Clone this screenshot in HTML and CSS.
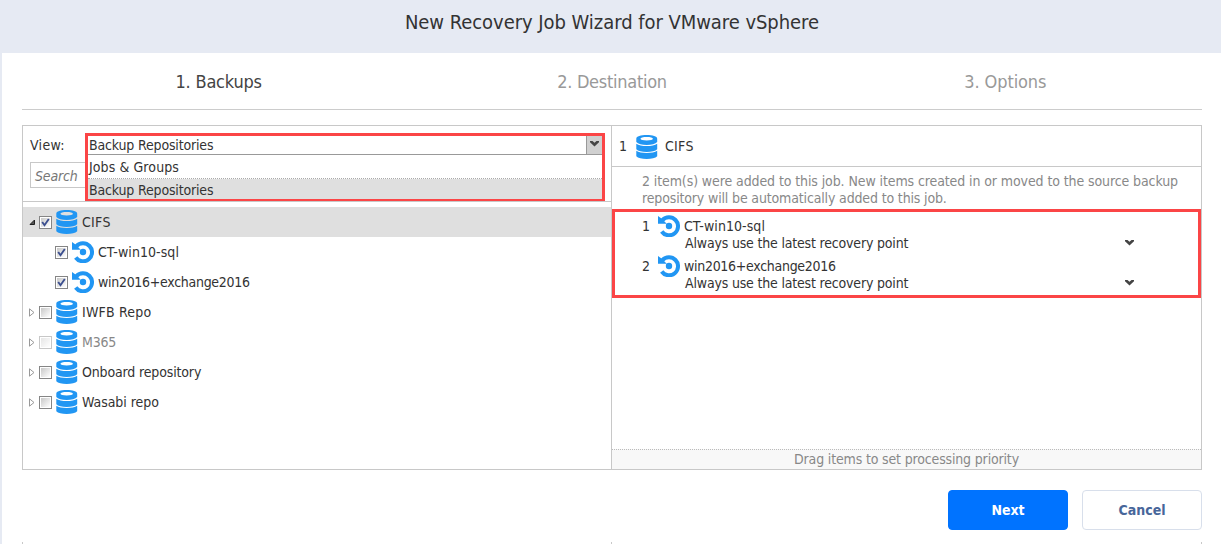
FILE: index.html
```html
<!DOCTYPE html>
<html lang="en">
<head>
<meta charset="utf-8">
<title>New Recovery Job Wizard for VMware vSphere</title>
<link rel="stylesheet" href="styles.css">
</head>
<body>
<svg class="defs" aria-hidden="true">
  <symbol id="db" viewBox="0 0 22 24">
    <path fill="#2196f3" fill-rule="evenodd" d="M0.3 3.800C0.3 1.400 4.800 0.1 10.700 0.1S21.200 1.400 21.200 3.800V7C19.500 9 15.500 9.900 10.700 9.900S2 9 0.300 7ZM10.700 2.100C7 2.100 4.500 2.700 4.500 3.700S7 5.400 10.700 5.400S16.900 4.700 16.900 3.700S14.400 2.100 10.700 2.100Z"/>
    <path fill="#2196f3" d="M0.300 8.700C2.500 10.300 6.300 11 10.700 11S19 10.300 21.200 8.700V14.200C19.500 16.100 15.500 16.900 10.700 16.900S2 16.100 0.300 14.200ZM0.300 15.800C2.500 17.400 6.300 18 10.700 18S19 17.400 21.200 15.800V21.300C19.500 23.100 15.500 23.900 10.700 23.900S2 23.100 0.300 21.300Z"/>
  </symbol>
  <symbol id="point" viewBox="0 0 22 22">
    <path fill="none" stroke="#2196f3" stroke-width="4" d="M4.300 5.300A9 9 0 1 1 3.700 16.500"/>
    <path fill="#2196f3" d="M0 1L3.500 3.500L8.800 8.800H0Z"/>
    <circle cx="11" cy="11" r="3.200" fill="#2196f3"/>
  </symbol>
  <symbol id="chev" viewBox="0 0 9 6">
    <path fill="#444" d="M0 0H2.500L4.500 1.800L6.500 0H9V1.200L4.500 5.500L0 1.200Z"/>
  </symbol>
  <symbol id="closed" viewBox="0 0 6 9">
    <path fill="#fff" stroke="#999" stroke-width="1" d="M.5 .8V8.200L5 4.500Z"/>
  </symbol>
  <symbol id="opened" viewBox="0 0 7 7">
    <path fill="#555" stroke="#222" stroke-width="1" d="M5.500 1V5.500H1Z"/>
  </symbol>
  <symbol id="tick" viewBox="0 0 9 9">
    <path fill="none" stroke="#3c4f8f" stroke-width="1.900" d="M1.200 4L3.500 7.200L7.800 1"/>
  </symbol>
</svg>
<header class="title"><span class="t-title">New Recovery Job Wizard for VMware vSphere</span></header>
<main class="wizard">
  <nav class="steps">
    <div class="step active"><span class="t-s1">1. Backups</span></div>
    <div class="step"><span class="t-s2">2. Destination</span></div>
    <div class="step"><span class="t-s3">3. Options</span></div>
  </nav>
  <div class="panels">
    <section class="source">
      <div class="filters">
        <div class="view"><span class="t-cifs">View:</span></div>
        <div class="search">Search</div>
        <div class="combo">
          <div class="value"><span class="t-repo">Backup Repositories</span><i class="arrow"><svg class="chev"><use href="#chev"/></svg></i></div>
          <div class="option"><span class="t-jobs">Jobs &amp; Groups</span></div>
          <div class="option chosen"><span class="t-repo">Backup Repositories</span></div>
        </div>
      </div>
      <div class="tree">
        <div class="node selected"><svg class="exp open"><use href="#opened"/></svg><i class="check"><svg><use href="#tick"/></svg></i><svg class="db"><use href="#db"/></svg><span class="t-cifs">CIFS</span></div>
        <div class="node child"><i class="check"><svg><use href="#tick"/></svg></i><svg class="point"><use href="#point"/></svg><span class="t-ct">CT-win10-sql</span></div>
        <div class="node child"><i class="check"><svg><use href="#tick"/></svg></i><svg class="point"><use href="#point"/></svg><span class="t-win">win2016+exchange2016</span></div>
        <div class="node"><svg class="exp"><use href="#closed"/></svg><i class="check"></i><svg class="db"><use href="#db"/></svg><span class="t-iwfb">IWFB Repo</span></div>
        <div class="node disabled"><svg class="exp"><use href="#closed"/></svg><i class="check"></i><svg class="db"><use href="#db"/></svg><span class="t-m365">M365</span></div>
        <div class="node"><svg class="exp"><use href="#closed"/></svg><i class="check"></i><svg class="db"><use href="#db"/></svg><span class="t-onb">Onboard repository</span></div>
        <div class="node"><svg class="exp"><use href="#closed"/></svg><i class="check"></i><svg class="db"><use href="#db"/></svg><span class="t-was">Wasabi repo</span></div>
      </div>
    </section>
    <section class="chosen-items">
      <div class="group"><span class="num">1</span><svg class="db"><use href="#db"/></svg><span class="t-cifs">CIFS</span></div>
      <p class="note"><span class="t-n1">2 item(s) were added to this job. New items created in or moved to the source backup</span><br><span class="t-n2">repository will be automatically added to this job.</span></p>
      <div class="items">
        <div class="item"><span class="num">1</span><svg class="point"><use href="#point"/></svg>
          <div class="info"><div><span class="t-ct">CT-win10-sql</span></div><div class="rp"><span class="t-rp">Always use the latest recovery point</span><svg class="chev"><use href="#chev"/></svg></div></div></div>
        <div class="item"><span class="num">2</span><svg class="point"><use href="#point"/></svg>
          <div class="info"><div><span class="t-win">win2016+exchange2016</span></div><div class="rp"><span class="t-rp">Always use the latest recovery point</span><svg class="chev"><use href="#chev"/></svg></div></div></div>
      </div>
      <div class="hint"><span class="t-hint">Drag items to set processing priority</span></div>
    </section>
  </div>
  <div class="actions"><button class="btn primary">Next</button><button class="btn">Cancel</button></div>
  <div class="next-panels"><i></i><i></i></div>
</main>
</body>
</html>
```

FILE: styles.css
```css
* { box-sizing: border-box; }
body { margin: 0; width: 1221px; height: 544px; overflow: hidden; background: #fff; color: #333; font: 14px/17px "DejaVu Sans Condensed", "DejaVu Sans", sans-serif; font-stretch: condensed; white-space: nowrap; }
.defs { position: absolute; width: 0; height: 0; }
svg, i { display: block; flex: none; }
.title { height: 53px; background: #e6eaf3; text-align: center; font-size: 20px; line-height: 44px; padding-left: 3px; }
.wizard { height: 491px; border-left: 2px solid #e6eaf3; padding: 0 19px 0 20px; display: flex; flex-direction: column; }
.steps { display: grid; grid-template-columns: repeat(3, 1fr); height: 57px; border-bottom: 1px solid #ccc; flex: none; }
.step { text-align: center; font-size: 18px; line-height: 58px; color: #999; }
.step.active { color: #444; }
.panels { display: grid; grid-template-columns: 589px 1fr; margin-top: 15px; height: 345px; border: 1px solid #c8c8c8; flex: none; }
.chosen-items { border-left: 1px solid #c8c8c8; margin-left: -1px; display: flex; flex-direction: column; }
.filters { position: relative; height: 76px; border-bottom: 1px solid #c8c8c8; padding: 11px 7px 0; }
.search { margin-top: 8px; width: 80px; height: 26px; border: 1px solid #c8c8c8; font-style: italic; color: #777; line-height: 26px; padding-left: 4px; letter-spacing: -.15px; }
.combo { position: absolute; left: 62px; top: 7px; width: 520px; height: 68px; border: 3px solid #fb4546; background: #fff; }
.value { display: flex; justify-content: space-between; height: 19px; line-height: 18px; border-bottom: 1px solid #999; padding-left: 1px; }
.arrow { width: 16px; height: 18px; background: #d0d0d0; border-left: 1px solid #999; padding: 5px 0 0 3px; }
.chev { width: 9px; height: 6px; }
.option { height: 23px; line-height: 24px; padding-left: 1px; }
.option.chosen { height: 20px; line-height: 22px; background: #dfdfdf; }
.option:not(.chosen) { border-bottom: 1px dotted #aaa; height: 24px; }
.tree { padding-top: 5px; }
.node { display: flex; align-items: center; height: 30px; padding-left: 6px; }
.node.selected { background: #dfdfdf; }
.exp { width: 6px; height: 9px; margin-right: 4px; }
.exp.open { width: 7px; height: 7px; margin-right: 3px; }
.check { width: 13px; height: 13px; border: 1px solid #858585; background: linear-gradient(135deg, #c8c8c8, #fff) content-box, #fff; padding: 1px; margin-right: 4px; }
.check svg { width: 9px; height: 9px; }
.db { width: 22px; height: 24px; margin-right: 4px; }
.point { width: 22px; height: 22px; margin-right: 4px; }
.child { padding-left: 32px; }
.disabled { color: #888; }
.disabled .check { opacity: .45; }
.group { display: flex; align-items: center; height: 41px; border-bottom: 1px solid #c8c8c8; padding-left: 7px; }
.group .num { width: 17px; }
.group .db { margin-right: 7px; margin-top: 2px; }
.note { margin: 6px 0 0 30px; color: #888; }
.items { margin: 2px 0 0; height: 89px; width: 589px; border: 3px solid #fb4546; padding: 6px 0 0 27px; }
.item { display: flex; height: 40px; }
.item .num { width: 16px; }
.item .point { margin: -3px 4px 0 0; }
.item .rp { display: flex; align-items: center; justify-content: space-between; width: 450px; padding-left: 1px; }
.rp .chev { margin-top: -2px; }
.hint { margin-top: auto; height: 20px; border-top: 1px dotted #bbb; background: #f8f8f8; text-align: center; color: #888; line-height: 19px; }
.actions { display: flex; justify-content: flex-end; gap: 14px; margin-top: 20px; }
.btn { width: 120px; height: 40px; border: 1px solid #d8dfeb; border-radius: 4px; background: #fff; color: #47669a; font: bold 14px "DejaVu Sans Condensed", "DejaVu Sans", sans-serif; padding: 0; }
.btn.primary { background: #0073ff; border-color: #0073ff; color: #fff; }
.next-panels { display: grid; grid-template-columns: 589px 1fr; height: 2px; margin-top: 12px; border-left: 1px solid #c8c8c8; }
.next-panels i { border-right: 1px solid #c8c8c8; }

/* Tracking per label */
.t-title { letter-spacing: -.05px; }
.t-s1 { letter-spacing: -.2px; }
.t-s2 { letter-spacing: -.28px; }
.t-s3 { letter-spacing: -.1px; }
.t-repo { letter-spacing: -.16px; }
.t-jobs { letter-spacing: .1px; }
.t-cifs { letter-spacing: .3px; }
.t-ct { letter-spacing: .07px; }
.t-win { letter-spacing: -.29px; }
.t-iwfb { letter-spacing: .2px; }
.t-m365 { letter-spacing: -.2px; }
.t-onb { letter-spacing: -.15px; }
.t-was { letter-spacing: -.05px; }
.t-n1 { letter-spacing: -.1px; }
.t-n2 { letter-spacing: -.15px; }
.t-rp { letter-spacing: -.18px; }
.t-hint { letter-spacing: -.16px; }
```
